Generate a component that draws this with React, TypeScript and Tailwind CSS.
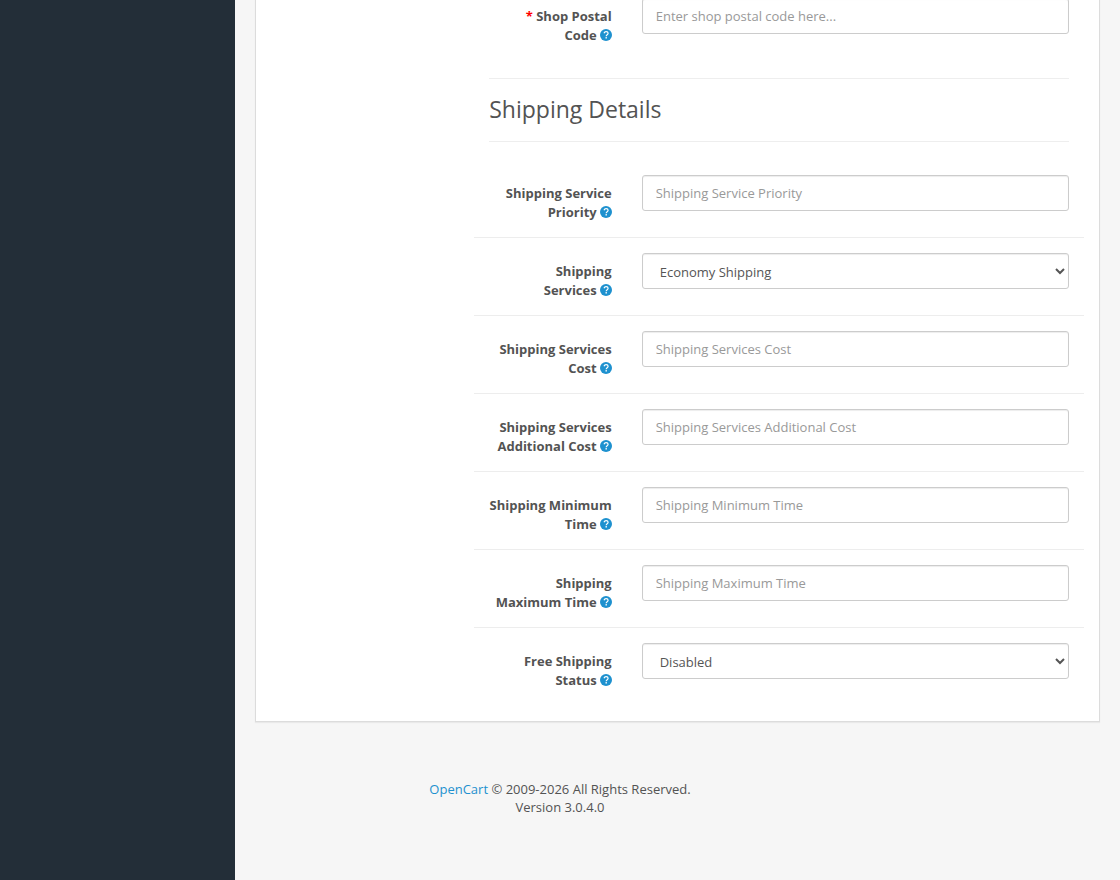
import React from "react";

interface Field {
  id: string;
  label: string;
  // stays on the same line as the help icon
  tail: string;
  placeholder?: string;
  options?: string[];
  required?: boolean;
}

const postalField: Field = {
  id: "input-postal",
  label: "Shop Postal",
  tail: "Code",
  placeholder: "Enter shop postal code here...",
  required: true,
};

const shippingFields: Field[] = [
  {
    id: "input-priority",
    label: "Shipping Service",
    tail: "Priority",
    placeholder: "Shipping Service Priority",
  },
  {
    id: "input-services",
    label: "Shipping",
    tail: "Services",
    options: ["Economy Shipping", "Standard Shipping", "Expedited Shipping"],
  },
  {
    id: "input-cost",
    label: "Shipping Services",
    tail: "Cost",
    placeholder: "Shipping Services Cost",
  },
  {
    id: "input-additional-cost",
    label: "Shipping Services",
    tail: "Additional Cost",
    placeholder: "Shipping Services Additional Cost",
  },
  {
    id: "input-min-time",
    label: "Shipping Minimum",
    tail: "Time",
    placeholder: "Shipping Minimum Time",
  },
  {
    id: "input-max-time",
    label: "Shipping",
    tail: "Maximum Time",
    placeholder: "Shipping Maximum Time",
  },
  {
    id: "input-free-status",
    label: "Free Shipping",
    tail: "Status",
    options: ["Disabled", "Enabled"],
  },
];

const HelpIcon = () => (
  <svg
    viewBox="0 0 12 12"
    className="ml-[3px] inline-block h-3 w-3 align-[-1px]"
    aria-hidden="true"
  >
    <circle cx="6" cy="6" r="6" fill="#1e91cf" />
    <path
      d="M4 4.3C4.4 3.2 5.100 2.700 6.100 2.700c1.200 0 2 .700 2 1.600 0 1.400-1.900 1.400-1.900 2.900"
      fill="none"
      stroke="#fff"
      strokeWidth="1.2"
    />
    <rect x="5.5" y="8.1" width="1.4" height="1.4" fill="#fff" />
  </svg>
);

const controlStyle =
  "block h-9 w-full rounded-[3px] border border-[#cccccc] bg-white text-[13px] text-[#555555] shadow-[inset_0_1px_1px_rgba(0,0,0,0.075)] outline-none";

const FormRow: React.FC<{ field: Field }> = ({ field }) => (
  <div className="flex py-[15px]">
    <label
      htmlFor={field.id}
      className="w-1/4 shrink-0 px-[15px] pt-[9px] text-right font-bold"
    >
      {field.required && <span className="text-[#ff0000]">* </span>}
      {field.label}{" "}
      <span className="whitespace-nowrap">
        {field.tail}
        <HelpIcon />
      </span>
    </label>
    <div className="w-3/4 px-[15px]">
      {field.options ? (
        <select id={field.id} className={`${controlStyle} px-[13px] pt-px`}>
          {field.options.map((option) => (
            <option key={option}>{option}</option>
          ))}
        </select>
      ) : (
        <input
          id={field.id}
          type="text"
          placeholder={field.placeholder}
          className={`${controlStyle} px-[13px] placeholder:text-[#999999]`}
        />
      )}
    </div>
  </div>
);

export default function App() {
  return (
    <div className="grid min-h-screen grid-cols-[235px_minmax(0,1fr)] grid-rows-[auto_1fr] overflow-hidden bg-[#f6f6f6] font-['Open_Sans','Noto_Sans',sans-serif] text-[13px] leading-[19px] text-[#535353]">
      <aside className="col-start-1 row-span-2 row-start-1 bg-[#232e38]" />

      <main className="col-start-2 row-start-1 px-5">
        <div className="border border-t-0 border-[#dcdcdc] bg-white px-[15px] pb-4 shadow-[0_1px_1px_rgba(0,0,0,0.05)]">
          <form className="-mt-[17px] ml-[25%]">
            <FormRow field={postalField} />
            <h3 className="mx-[15px] my-[18px] border-y border-[#eeeeee] pt-[17px] pb-[19px] text-[23px] leading-[26px]">
              Shipping Details
            </h3>
            <div className="divide-y divide-[#ededed]">
              {shippingFields.map((field) => (
                <FormRow key={field.id} field={field} />
              ))}
            </div>
          </form>
        </div>
      </main>

      {/* The footer is centred on the whole window, sidebar included */}
      <footer className="col-span-2 col-start-1 row-start-2 pt-[58px] text-center leading-[18px]">
        <a href="#" className="text-[#1e91cf]">
          OpenCart
        </a>{" "}
        © 2009-2026 All Rights Reserved.
        <br />
        Version 3.0.4.0
      </footer>
    </div>
  );
}
